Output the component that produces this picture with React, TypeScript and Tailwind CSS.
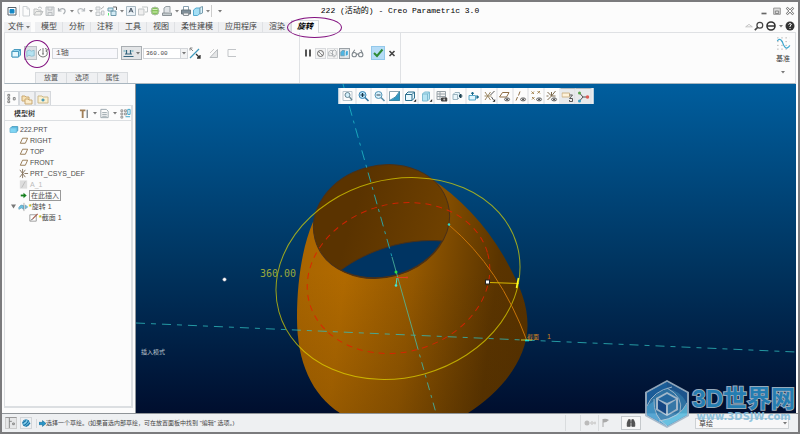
import type { ReactNode } from "react"

type IconProps = { children: ReactNode; className?: string }

function Icon({ children, className = "size-3" }: IconProps) {
    return (
        <svg viewBox="0 0 12 12" className={`${className} shrink-0`} fill="none" stroke="#7d858b" aria-hidden="true">
            {children}
        </svg>
    )
}

function Caret({ className = "w-[7px]" }: { className?: string }) {
    return (
        <span className={`flex shrink-0 justify-center ${className}`}>
            <svg viewBox="0 0 4 3" className="h-[3px] w-1" aria-hidden="true">
                <path d="M0 0H4L2 2.6Z" fill="#777" />
            </svg>
        </span>
    )
}

const cube = (
    <g strokeWidth="1" stroke="#4a9cc0">
        <path d="M2 4.5L4 2.5H10.5V8L8.5 10H2Z" fill="#8fd3ee" />
        <path d="M2 4.5H8.5V10H2Z" fill="#e6f8fe" />
        <path d="M8.5 4.5L10.5 2.5" />
    </g>
)

const eye = (
    <g strokeWidth=".8" stroke="#444">
        <ellipse cx="8.6" cy="9.4" rx="2.6" ry="1.5" fill="#eee" />
        <circle cx="8.6" cy="9.4" r=".6" fill="#333" />
    </g>
)

const quickAccess: { label: string; icon: ReactNode; menu?: boolean }[] = [
    { label: "新建", icon: <path d="M3 1.500H7L9.500 4V11H3ZM7 1.500V4H9.500" stroke="#c9cdd0" /> },
    { label: "打开", icon: <><path d="M2 10V4H5L6 5H9V10ZM2 10L4 6.500H11L9 10" stroke="#b9bcbd" fill="#ededea" /><path d="M6 3Q8 .5 10 3.500" stroke="#b0b5b8" /></> },
    { label: "保存", icon: <><path d="M2 2H10V10.500H2Z" stroke="#b4b8bb" fill="#e3e5e6" /><path d="M4 2V5H8V2M4 10V7.500H8V10" stroke="#b4b8bb" /></> },
    { label: "撤消", menu: true, icon: <path d="M2.500 3V6H5.500M2.500 6Q5 2.500 8 4Q10.500 6 7.500 9" stroke="#9da3a8" strokeWidth="1.200" /> },
    { label: "重做", menu: true, icon: <path d="M9.500 3V6H6.500M9.500 6Q7 2.500 4 4Q1.500 6 4.500 9" stroke="#b2b7bb" strokeWidth="1.200" /> },
    { label: "重新生成", icon: <><path d="M2 2H6V5H2ZM2 7H6V10.500H2ZM7.500 6H10V10H7.500Z" stroke="#b9bec2" fill="#eceeef" /><path d="M7 4L10 1.500" stroke="#aaa" /></> },
    { label: "窗口", menu: true, icon: <><path d="M2 3H7V6H2ZM5 6H10V10.500H5Z" fill="#cfeaf5" stroke="#5f8ea3" /><path d="M7 2H10.500V5" stroke="#555" /><path d="M2.500 8V10.500" stroke="#4e6" /></> },
    { label: "注释", icon: <><path d="M1.500 1.500H10.500V10.500H1.500Z" fill="#eaf2f7" stroke="#9eb0bb" /><path d="M4 7.500L6 3L8 7.500M5 6H7" stroke="#345" /></> },
    { label: "复制窗口", icon: <><path d="M1.500 4H7V10H1.500Z" fill="#eee" stroke="#b9bec0" /><path d="M5 2H10.500V7H8" stroke="#b9bec0" /></> },
    { label: "联机", icon: <><circle cx="6" cy="6" r="4" fill="#79bd4a" stroke="#a6b9a0" /><path d="M3.500 4.500H8.500M3.500 7H8.500" stroke="#d4efb6" /></> },
    { label: "模型显示", menu: true, icon: <><path d="M3 8V3L5 1.500H9V7" fill="#dde2e5" stroke="#8b949a" /><path d="M1.500 8H10.500V10.500H1.500Z" fill="#bfc7cb" stroke="#7e878c" /></> },
    { label: "打印", icon: <><path d="M3.500 5V1.500H8.500V5" fill="#fff" stroke="#7c97a8" /><path d="M1.500 5H10.500V9H1.500Z" fill="#728490" stroke="#5b6871" /><path d="M3.500 8H8.500V10.500H3.500Z" fill="#eee" /></> },
    { label: "视图管理", menu: true, icon: <><path d="M1.500 5L4 3H8V8.500L5.500 10.500H1.500Z" fill="#9bdcf5" stroke="#45a3cc" /><path d="M8 2.500L10.500 1.500V8L8 9Z" fill="#d9f3fd" stroke="#6b93a5" /></> },
]

const viewTools: { label: string; icon: ReactNode; pressed?: boolean }[] = [
    { label: "重新调整", icon: <><path d="M1.500 1.500H10.500V10.500H1.500Z" stroke="#b9c6ce" /><circle cx="6" cy="5" r="2.500" fill="#d4f0fb" stroke="#668694" /><path d="M8 7L10.500 10" stroke="#668694" strokeWidth="1.300" /></> },
    { label: "放大", icon: <><circle cx="5" cy="5" r="3.500" fill="#b8e4f8" stroke="#3a86b4" /><path d="M3 5H7M5 3V7" stroke="#16364b" strokeWidth="1.200" /><path d="M7.500 7.500L11 11" stroke="#3376a0" strokeWidth="1.600" /></> },
    { label: "缩小", icon: <><circle cx="5" cy="5" r="3.500" fill="#d7f0fb" stroke="#5798b8" /><path d="M3 5H7" stroke="#345" strokeWidth="1.200" /><path d="M7.500 7.500L11 11" stroke="#5e8fa9" strokeWidth="1.600" /></> },
    { label: "重画", icon: <><path d="M1 1.500H11V10.500H1Z" fill="#fff" stroke="#8aa4b1" /><path d="M11 1.500V10.500H1Q8 8 11 1.500Z" fill="#2f96c1" stroke="#3a88a8" /></> },
    { label: "显示样式", icon: <><path d="M1 4.500L3.500 2H10V8L7.500 10.500H1ZM1 4.500H7.500V10.500M7.500 4.500L10 2" fill="#e8f8fe" stroke="#2c6f8d" /><path d="M11.800 9V11.800H9Z" fill="#222" stroke="none" /></> },
    { label: "已保存方向", icon: <><path d="M2 4L4 2H9V9L7 11H2ZM2 4H7V11M7 4L9 2" fill="#b5e4f3" stroke="#7ebbd1" /><path d="M11.800 9V11.800H9Z" fill="#222" stroke="none" /></> },
    { label: "视图管理器", icon: <><path d="M1.500 1.500H10V9.500H1.500ZM1.500 4H10M1.500 6.500H10M4.500 1.500V9.500" stroke="#98a2a8" fill="#f4f4f4" /><path d="M6 8H11.500V11H6Z" fill="#444" stroke="#444" /><circle cx="8.700" cy="9.400" r="1" fill="#bbb" stroke="none" /></> },
    { label: "剖面", icon: <><path d="M1.500 4.500L3.500 2.500H8V7.500L6 9.500H1.500ZM1.500 4.500H6V9.500" fill="#e9f6fb" stroke="#9cb5c1" /><path d="M11 6H8M9.500 4V8L7.500 6Z" fill="#16465f" stroke="#245" /></> },
    { label: "定向", icon: <><path d="M1.500 5.500H8V10H1.500Z" fill="#dff5fd" stroke="#58a8c8" /><path d="M5 5V2.500M4 3.500L5 2L6 3.500ZM9 7H11M9.500 5.500L11 7L9.500 8.500Z" fill="#17688a" stroke="#17688a" /></> },
    { label: "基准显示", icon: <><path d="M1.500 2L7 10M7 2L1.500 10M1 6H8" stroke="#9a8660" /><path d="M7 5L11 1M8 7L10 10" stroke="#555" /><path d="M11.800 9V11.800H9Z" fill="#222" stroke="none" /></> },
    { label: "平面显示", icon: <><path d="M1 7L4 2.500H10.500L8 7Z" stroke="#8d6d45" fill="#fff" />{eye}</> },
    { label: "轴显示", icon: <><path d="M1.500 10.500L3 7M4 5.500L5.500 1.500" stroke="#8d6d45" />{eye}</> },
    { label: "点显示", icon: <><path d="M1 1.500L3.500 4M3.500 1.500L1 4M7 1L9.500 3.500M9.500 1L7 3.500M1.500 7L4 9.500M4 7L1.500 9.500" stroke="#a48552" />{eye}</> },
    { label: "坐标系显示", icon: <><path d="M2 2L6 6L10 1M6 6V2M6 6L2 10M6 6H10M1 6H3" stroke="#7c6a4e" />{eye}</> },
    { label: "注释显示", pressed: true, icon: <><path d="M.5 2H8V6H.5Z" fill="#fff2d9" stroke="#cdb48a" /><path d="M8 4H11L8 7.500H11V10.500H8V9" stroke="#555" /></> },
    { label: "旋转中心", pressed: true, icon: <><path d="M2 2L5.500 6L2 10M5.500 6H10" stroke="#555" /><circle cx="2" cy="2" r="1.500" fill="#58a44c" stroke="none" /><circle cx="2" cy="10" r="1.500" fill="#3b9dc1" stroke="none" /><circle cx="10" cy="6" r="1.800" fill="#df5d55" stroke="none" /></> },
]

const plane = <path d="M2.500 9L5 3.500H10.500L8 9Z" stroke="#94764f" />

const datums = ["RIGHT", "TOP", "FRONT"]

function TitleBar() {
    return (
        <header className="relative flex h-[18px] shrink-0 items-center pr-[3px] pl-1">
            <button aria-label="系统" className="mr-px">
                <Icon><path d="M2 2.500H10V10H2Z" fill="#fff" stroke="#58626a" /><path d="M4 4.500H8V8H4Z" fill="#1688c5" stroke="#1688c5" /></Icon>
            </button>
            <div className="flex items-center border-l border-[#ddd]">
                {quickAccess.map((item) => (
                    <button key={item.label} aria-label={item.label} className="flex items-center opacity-90">
                        <Icon>{item.icon}</Icon>
                        {item.menu && <Caret />}
                    </button>
                ))}
            </div>
            <button aria-label="自定义" className="flex h-3 items-center border-l border-[#ccc] pl-1">
                <Caret />
            </button>
            <h1 className="absolute left-1/2 -translate-x-1/2 font-['Liberation_Mono','Noto_Sans_CJK_SC',monospace] text-[8px] whitespace-nowrap text-black">
                222 (活动的) - Creo Parametric 3.0
            </h1>
            <div className="ml-auto flex items-center gap-[3px]">
                <button aria-label="最小化"><Icon className="size-[10px]"><path d="M3 9H9" stroke="#666" strokeWidth="2" /></Icon></button>
                <button aria-label="还原"><Icon className="size-[10px]"><path d="M2 2.500H10V10H2Z" stroke="#888" fill="#ddd" /><path d="M4 6H8V9H4Z" stroke="#777" /></Icon></button>
                <button aria-label="关闭"><Icon className="size-[10px]"><path d="M2 2L10 10M10 2L2 10" strokeWidth="3.200" stroke="#888" /><path d="M2.500 2.500L9.500 9.500M9.500 2.500L2.500 9.500" strokeWidth="1.200" stroke="#fff" /></Icon></button>
            </div>
        </header>
    )
}

function RibbonTabs() {
    const tabs = ["模型", "分析", "注释", "工具", "视图", "柔性建模", "应用程序", "渲染"]

    return (
        <nav className="flex h-3 shrink-0 items-end px-0.5 text-[8px] leading-[10px] text-[#444]">
            <button className="mr-1 flex h-[10px] items-center bg-[#eff0f2] pl-1">
                文件
                <Caret />
            </button>
            {tabs.map((tab) => (
                <button key={tab} className="h-[10px] border-r border-[#dfe1e4] bg-[#eff0f2] pr-[5px] pl-[6px]">
                    {tab}
                </button>
            ))}
            <div className="relative z-10">
                <button className="-mb-px h-[13px] border border-b-0 border-[#d5d8dc] bg-[#fcfcfc] px-[5px] font-bold text-black italic">
                    旋转
                </button>
                {/* callout round the active tab */}
                <span className="pointer-events-none absolute -top-[3px] -left-1 h-[21px] w-[55px] rounded-[50%] border-[1.500px] border-[#82107f]" />
            </div>
            <div className="ml-auto flex h-full items-center">
                <button aria-label="折叠"><Icon className="size-[10px]"><path d="M2 7L6 4L10 7Z" stroke="#bbb" /></Icon></button>
                <button aria-label="搜索"><Icon className="size-[10px]"><circle cx="7" cy="5" r="3.500" stroke="#444" strokeWidth="1.500" /><path d="M4.500 7.500L1 11" stroke="#444" strokeWidth="2" /></Icon></button>
                <button aria-label="联机学习" className="ml-px flex items-center"><Icon><circle cx="6" cy="6" r="4" stroke="#333" strokeWidth="1.600" /><path d="M2 6H10" stroke="#333" strokeWidth="1.500" /></Icon><Caret /></button>
                <button aria-label="帮助"><Icon><circle cx="6" cy="6" r="4.500" fill="#333" stroke="none" /><path d="M4.500 4.500Q6 2.500 7.300 4.200Q7.500 5 6 6V7M6 8V9" stroke="#fff" /></Icon></button>
            </div>
        </nav>
    )
}

function Ribbon() {
    return (
        <section className="mx-0.5 flex h-[52px] shrink-0 border border-b-[#a9b6bf] border-[#dfe1e4]">
            <div className="flex w-[295px] shrink-0 flex-col justify-between border-r border-[#dfe1e4]">
                <div className="flex items-center pt-[13px] pl-[5px]">
                    <button aria-label="实体" className="mr-0.5"><Icon>{cube}</Icon></button>
                    <div className="relative mr-[3px] flex items-center">
                        <button aria-label="曲面" className="border border-[#bbc0c4] bg-[#dde0e3]">
                            <Icon className="h-3 w-[11px]"><path d="M2 4Q5 1.500 7 4L10 3V9L7 9.500Q4 7 2 10Z" fill="#b5e3f2" stroke="#8cbdd0" /></Icon>
                        </button>
                        <button aria-label="加厚">
                            <Icon><path d="M6 1V7M5 7H7M4 2.500Q0 4 2 8Q6 12 10 8Q11 5 9 3M8 1.500L10.500 2.500L9 5" stroke="#777" /></Icon>
                        </button>
                        {/* callout round the two type buttons */}
                        <span className="pointer-events-none absolute -top-1.5 left-0 h-7 w-[26px] rounded-[50%] border-[1.500px] border-[#82107f]" />
                    </div>
                    <input aria-label="轴" defaultValue="1轴" className="mr-[3px] h-[11px] w-[66px] border border-[#d3d6da] bg-[#f8f8fc] px-[3px] font-['Liberation_Mono','Noto_Sans_CJK_SC',monospace] text-[8px] text-[#555]" />
                    <button aria-label="旋转角度类型" className="flex h-[14px] items-center border border-[#a9aeb2] bg-[#e3e5e7]">
                        <Icon className="h-3 w-[13px]"><path d="M1 9.500H11M4 3V7M8 3V7M2.500 7H9.500" stroke="#35657e" strokeWidth="1.200" /><path d="M1 4H3M9 4H11" stroke="#5ab" /></Icon>
                        <Caret className="w-[6px]" />
                    </button>
                    <input aria-label="角度" defaultValue="360.00" className="ml-px h-[11px] w-[38px] border border-[#d3d6da] bg-white px-0.5 font-['Liberation_Mono',monospace] text-[6px] text-[#444]" />
                    <button aria-label="角度列表" className="flex h-[11px] items-center border border-l-0 border-[#d3d6da] bg-[#f2f3f4]"><Caret className="w-[6px]" /></button>
                    <button aria-label="反向" className="mr-[7px] ml-px"><Icon><path d="M1 11L10 2" stroke="#409abd" strokeWidth="1.300" /><path d="M4 4L1 1M1 3.500V1H3.500" stroke="#888" /><path d="M7 7L11 11M11 8V11H8" stroke="#333" strokeWidth="1.300" /></Icon></button>
                    <button aria-label="移除材料" className="mr-[6px]"><Icon><path d="M2 10.500L9.500 2.500V10.500Z" fill="#e5e6e7" stroke="#b6babd" /><path d="M2 6L6 2" stroke="#ccc" /></Icon></button>
                    <button aria-label="加厚草绘"><Icon><path d="M10 2.500H2V9.500H10" stroke="#c2c5c8" /></Icon></button>
                </div>
                <div className="flex pl-[30px] text-[7px] leading-[10px] text-[#555]">
                    {["放置", "选项", "属性"].map((label) => (
                        <button key={label} className="h-[11px] w-[31px] border border-r-0 border-b-0 border-[#d8dbde] bg-[#eff0f2] last:border-r">
                            {label}
                        </button>
                    ))}
                </div>
            </div>
            <div className="flex w-[101px] shrink-0 items-start gap-px border-r border-[#dfe1e4] pt-[13px] pl-0.5">
                <button aria-label="暂停"><Icon className="h-[14px] w-3"><path d="M4 2.500V9.500M8 2.500V9.500" stroke="#555" strokeWidth="2" /></Icon></button>
                <button aria-label="无预览" className="mt-0.5 border border-[#d8dadd] bg-[#f3f3f3]"><Icon className="size-[9px]"><circle cx="6" cy="6" r="4" stroke="#666" strokeWidth="1.300" /><path d="M3 3L9 9" stroke="#666" /></Icon></button>
                <button aria-label="分离预览" className="mt-0.5 border border-[#dcdee0] bg-[#f3f3f3]"><Icon className="size-[9px]"><path d="M1 4L3 2H6V9H1ZM6 3L9 1L11 3V8L8 11L6 9M3 5L9 9" stroke="#9a9fa3" /></Icon></button>
                <button aria-label="连接预览" className="mt-0.5 border border-[#9aa1a6] bg-[#dfe3e6]"><Icon className="size-[9px]"><path d="M1 4L3 2H6V9H1Z" fill="#4fb6e3" stroke="#6798ae" /><path d="M7 4L9 2H11V8L7 10Z" fill="#3aa9dc" stroke="#fff" /></Icon></button>
                <button aria-label="校验预览"><Icon className="h-[14px] w-[13px]"><circle cx="3" cy="7.500" r="2" /><circle cx="9" cy="7.500" r="2" /><path d="M5 7H7M1.500 6L3.500 3M10.500 6L9 3" /></Icon></button>
                <button aria-label="确定" className="ml-[6px] border border-[#93c8ea] bg-[#b5dcf7]"><Icon><path d="M2 6L5 9L10.500 2.500" stroke="#2e8b35" strokeWidth="2" /></Icon></button>
                <button aria-label="取消"><Icon className="h-[14px] w-3"><path d="M3.500 4L8.500 9M8.500 4L3.500 9" stroke="#444" strokeWidth="1.600" /></Icon></button>
            </div>
            <button className="ml-auto flex w-6 flex-col items-center pt-[3px] text-[7px] leading-[9px] text-[#333]">
                <Icon className="size-[15px]">
                    <path d="M1 1.500H11M1 4.500H11M1 7.500H11M1 10.500H11" stroke="#aaa" strokeDasharray="1 2.300" strokeWidth=".8" />
                    <path d="M1 4Q3 1 5 4.500Q7 10.500 9 9.500Q10.500 9 11 7.500" stroke="#3da7cf" />
                </Icon>
                <span className="mt-[3px] mb-2">基准</span>
                <Caret />
            </button>
        </section>
    )
}

function ModelTree() {
    return (
        <aside className="flex w-[134px] shrink-0 flex-col border-r border-[#8d9499] px-0.5 pt-[7px] pb-[5px] text-[7px] leading-[11px] text-[#4c4c4c]">
            <div className="flex">
                <button aria-label="模型树" className="border border-b-0 border-[#d5d8dc] px-px"><Icon className="h-[13px] w-[11px]"><path d="M2 1.500H4V3.500H2ZM2 5H4V7H2ZM2 8.500H4V10.500H2ZM8 5H10V7.500H8Z" stroke="#777" /></Icon></button>
                <button aria-label="文件夹浏览器" className="border border-b-0 border-[#d5d8dc] bg-[#eff0f2] px-px"><Icon><path d="M1 3H4L5 4H8V8H1Z" fill="#f8e2b5" stroke="#c9a871" /><path d="M4 6H7L8 7H11V11H4Z" fill="#fbeccb" stroke="#c9a871" /></Icon></button>
                <button aria-label="收藏夹" className="border border-b-0 border-[#d5d8dc] bg-[#eff0f2] px-px"><Icon><path d="M1 3H5L6 4H11V10H1Z" fill="#fbf0cf" stroke="#cdb98a" /><path d="M6 5.500V8.500M4.500 7H7.500" stroke="#3a93b5" strokeWidth="1.300" /></Icon></button>
            </div>
            <div className="flex flex-1 flex-col border border-r-2 border-b-2 border-[#dcdfe2]">
                <div className="flex h-[15px] items-center border-b border-[#dcdfe2] pl-[9px]">
                    <h2 className="mr-auto font-medium text-[#222]">模型树</h2>
                    <button aria-label="设置" className="flex items-center"><Icon className="size-[11px]"><path d="M1 2.500H7M4 2.500V11" stroke="#a07f58" strokeWidth="2" /><path d="M9 2V11" stroke="#7d8890" strokeWidth="1.500" /></Icon><Caret className="w-[9px]" /></button>
                    <button aria-label="显示" className="flex items-center"><Icon className="size-[11px]"><path d="M2 1.500H8L10 3.500V10.500H2ZM3.500 5H8.500M3.500 7H8.500M3.500 9H8.500" stroke="#98a4ab" /></Icon><Caret className="w-[9px]" /></button>
                    <button aria-label="树列" className="ml-px"><Icon className="size-[11px]"><path d="M1 2H3V4H1ZM1 5.500H3V7.500H1ZM1 9H3V11H1ZM5 2H7V4H5ZM5 5.500H7V7.500H5Z" stroke="#777" strokeWidth=".8" /><path d="M8.500 1.500H11V7H8.500ZM6 9.500H11" stroke="#35a0c6" /></Icon></button>
                </div>
                <ul className="pt-[3px] pl-1">
                    <li className="flex items-center gap-px"><Icon className="h-[11px] w-[10px]"><path d="M1.500 4.500L3.500 2.500H10.500V7.500L8.500 9.500H1.500Z" fill="#54bce6" stroke="#4395b8" /><path d="M1.500 4.500H8.500V9.500H1.500Z" fill="#7fd6f5" stroke="#7fc6e3" /></Icon>222.PRT</li>
                    {datums.map((name) => (
                        <li key={name} className="flex items-center gap-px pl-[9px]"><Icon className="h-[11px] w-[11px]">{plane}</Icon>{name}</li>
                    ))}
                    <li className="flex items-center gap-px pl-[9px]"><Icon className="h-[11px] w-[11px]"><path d="M2 2L8 10M8 2L2 10M5 1V11M7 6H11" stroke="#85735c" /></Icon>PRT_CSYS_DEF</li>
                    <li className="flex items-center gap-px pl-[9px] text-[#bbb]"><Icon className="h-[11px] w-[11px]"><path d="M2 1.500H10V10.500H2Z" fill="#ddd" stroke="none" /><path d="M4 9.500L8 2.500" stroke="#bbb" /></Icon>A_1</li>
                    <li className="flex items-center pl-[9px]"><Icon className="h-[11px] w-[11px]"><path d="M3 6H7" stroke="#16801f" strokeWidth="2" /><path d="M6 3L9.500 6L6 9Z" fill="#16801f" stroke="none" /></Icon><span className="-my-px border border-[#999] px-px leading-[9px]">在此插入</span></li>
                    <li className="flex items-center">
                        <span className="flex w-[9px] justify-center"><Icon className="size-[5px]"><path d="M0 1H12L6 11Z" fill="#777" stroke="none" /></Icon></span>
                        <Icon className="h-[11px] w-[11px]"><path d="M1 7Q3 3 6 5V9Q4 6 1 9ZM8 4.500L10.500 6.500L8 8.500Z" fill="#69c2e2" stroke="#6fa9c2" /><path d="M6.500 2V11" stroke="#888" strokeWidth=".7" /></Icon>
                        <span className="font-bold text-[#b8b800]">*</span>旋转 1
                    </li>
                    <li className="flex items-center pl-[19px]"><Icon className="h-[11px] w-[11px]"><path d="M2 3H9V10H2Z" stroke="#999" fill="#fff" /><path d="M5 7.500L10.500 2" stroke="#a45b4a" strokeWidth="1.300" /><path d="M3.500 9L5 7.500" stroke="#333" /></Icon><span className="font-bold text-[#b8b800]">*</span>截面 1</li>
                </ul>
            </div>
        </aside>
    )
}

const bodyPath =
    "M313 222C303 245 297 279 297 318C297 362 312 395 340 413H468C500 393 527.500 360 527.500 325C527.500 305 521 288 508 264C489 228 462 199 430 178Z"

function ModelView() {
    return (
        <svg viewBox="136 84 660 329" preserveAspectRatio="xMidYMid slice" className="absolute inset-0 size-full" fill="none" role="img" aria-label="旋转特征">
            <defs>
                <linearGradient id="sky" x1="0" y1="0" x2="0" y2="1">
                    <stop offset="0" stopColor="#005e9e" />
                    <stop offset=".55" stopColor="#00345f" />
                    <stop offset="1" stopColor="#000e2e" />
                </linearGradient>
                <linearGradient id="body" gradientUnits="userSpaceOnUse" x1="297" y1="290" x2="524" y2="318">
                    <stop offset="0" stopColor="#a96500" />
                    <stop offset=".2" stopColor="#b16a00" />
                    <stop offset=".5" stopColor="#945800" />
                    <stop offset=".72" stopColor="#704200" />
                    <stop offset=".86" stopColor="#5a3400" />
                    <stop offset="1" stopColor="#573200" />
                </linearGradient>
                <linearGradient id="shade" x1="0" y1="0" x2="0" y2="1">
                    <stop offset=".4" stopColor="#3f2400" stopOpacity="0" />
                    <stop offset="1" stopColor="#3f2400" stopOpacity=".22" />
                </linearGradient>
                <linearGradient id="bore" x1="0" y1="0" x2="1" y2=".5">
                    <stop offset=".4" stopColor="#5a3300" />
                    <stop offset="1" stopColor="#6e4000" />
                </linearGradient>
            </defs>
            <rect x="136" y="84" width="660" height="329" fill="url(#sky)" />
            <path d={bodyPath} fill="url(#body)" />
            <path d={bodyPath} fill="url(#shade)" />
            <ellipse cx="381.500" cy="221.500" rx="68.800" ry="56" transform="rotate(-15 381.500 221.500)" fill="url(#bore)" stroke="#4a3018" />
            <path d="M341 270C368 250 406 238 442 241A68.800 56 -15 0 1 341 270Z" fill="#003462" stroke="#4a3018" />

            {/* drag circle and sketch circle */}
            <ellipse cx="398" cy="278.500" rx="123.600" ry="99" transform="rotate(-15.500 398 278.500)" stroke="#e4dc00" strokeOpacity=".68" />
            <ellipse cx="398.500" cy="278" rx="92.500" ry="74" transform="rotate(-15.500 398.500 278)" stroke="#e02000" strokeOpacity=".85" strokeDasharray="6 5" />

            {/* axes */}
            <path d="M343 84L392 257" stroke="#20bcc8" strokeOpacity=".8" strokeDasharray="10 5 3 5" />
            <path d="M392 257L416 342" stroke="#50bca0" strokeOpacity=".8" />
            <path d="M416 342L436 413" stroke="#40bcb0" strokeOpacity=".8" strokeDasharray="8 5 3 5" />
            <path d="M136 323L796 352" stroke="#30c0c0" strokeOpacity=".75" strokeDasharray="9 6 5 6" />
            <path d="M397 277.500H407" stroke="#e04020" />
            <circle cx="407" cy="277.500" r="1" fill="#e04020" />
            <circle cx="396" cy="272" r="1.500" fill="#30e040" />
            <path d="M397 278L396 285" stroke="#50e0c0" />
            <circle cx="396" cy="285.500" r="1.300" fill="#40e8d8" />

            <path d="M449 225Q500 268 527 341" stroke="#c87408" />
            <circle cx="449" cy="224.500" r="1.200" fill="#30d8c8" />
            <path d="M489 282.500L519 283.500" stroke="#d8b800" />
            <path d="M518.500 278L516.500 288" stroke="#ffff20" strokeWidth="1.600" />
            <rect x="485.500" y="280" width="4" height="4" fill="#fff" stroke="#222" />
            <path d="M521 340H532" stroke="#c0d040" />
            <path d="M525 340.500H529" stroke="#20e0d0" strokeWidth="1.600" />
            <circle cx="224.500" cy="279.500" r="1.800" fill="#fff" stroke="#889" strokeWidth=".5" />

            <text x="260" y="277" fill="#9aa83c" className="font-['DejaVu_Sans_Mono',monospace] text-[10px]">360.00</text>
            <text x="527" y="339" fill="#d08420" className="text-[6px]">截面</text>
            <text x="547" y="339" fill="#d08420" className="text-[7px]">1</text>
            <text x="141" y="354" fill="#bcc4cc" className="text-[6px]">插入模式</text>
        </svg>
    )
}

function Viewport() {
    return (
        <main className="relative min-w-0 flex-1 overflow-hidden">
            <ModelView />
            <div className="absolute top-1 left-1/2 grid w-[255px] -translate-x-1/2 grid-cols-16 border-x-2 border-[#e9ecee] bg-[#fcfcfc]">
                {viewTools.map((tool) => (
                    <button
                        key={tool.label}
                        aria-label={tool.label}
                        className={`flex h-4 items-center justify-center border-r border-[#d9dcdf] ${tool.pressed ? "border-t border-t-[#b5babd] bg-[#e8eaec]" : ""}`}
                    >
                        <Icon>{tool.icon}</Icon>
                    </button>
                ))}
            </div>
        </main>
    )
}

function StatusBar() {
    return (
        <footer className="flex h-[19px] shrink-0 items-center border-t border-[#8f9498] bg-[#eef0f2] px-[3px] text-[#444]">
            <button aria-label="导航器" className="mr-[3px] border border-[#ccc] border-t-[#999] bg-[#e6e7e8]"><Icon className="size-[10px]"><path d="M4 0V12M4 4H7M8 6H10V8H8Z" stroke="#777" /></Icon></button>
            <button aria-label="浏览器" className="border border-[#d2d5d8]"><Icon className="size-[10px]"><circle cx="6" cy="6" r="4" fill="#8ad0ee" stroke="#3187b4" /><path d="M3 9Q7 8 9 3M2 6L6 3M6 10L11 6" stroke="#1674a6" strokeWidth="1.300" /></Icon></button>
            <p className="ml-1 flex items-center border-l border-[#d5d8da] pl-0.5 text-[6px] whitespace-nowrap">
                <Icon className="size-[7px]"><path d="M0 4H6V1L12 6L6 11V8H0Z" fill="#2795c9" stroke="#1c6e98" /></Icon>
                选择一个草绘。(如果首选内部草绘，可在放置面板中找到 "编辑" 选项。)
            </p>
            <div className="ml-auto flex h-4 items-center">
                <span className="h-full w-[15px] border-l border-[#d9dcde]" />
                <span className="flex h-full w-[18px] items-center border-l border-[#d9dcde] pl-[3px]"><Icon><circle cx="3" cy="6" r="2.500" fill="#bbb" stroke="none" /><circle cx="8" cy="6" r="1.300" fill="#ddd" stroke="#ccc" /><circle cx="11" cy="6" r="1" fill="#ddd" stroke="#ccc" /></Icon></span>
                <span className="flex h-full w-[23px] items-center border-l border-[#d9dcde] pl-px"><Icon><path d="M3 2V10" stroke="#aaa" /><path d="M3 2Q6 1 9 3Q6 6 3 5.500Z" fill="#aaa" stroke="none" /></Icon></span>
                <button aria-label="查找" className="flex h-[14px] w-5 items-center justify-center border border-[#c5c9cc] bg-[#f7f7f7]"><Icon className="size-[10px]"><path d="M3 2H5V10H1.500V6ZM7 2H9L10.500 6V10H7ZM5 5H7" fill="#555" stroke="#444" /></Icon></button>
                <div className="relative ml-[54px]">
                    <select aria-label="选择过滤器" className="block h-[11px] w-[94px] appearance-none border border-[#cdd1d4] bg-[#f7f7f8] pl-[3px] text-[7px] leading-[9px]">
                        <option>草绘</option>
                    </select>
                    <Caret className="pointer-events-none absolute top-1 right-px w-[6px]" />
                </div>
                <span className="w-[6px]" />
            </div>
        </footer>
    )
}

function Watermark() {
    return (
        <div className="pointer-events-none absolute right-[3px] bottom-[3px] flex items-center gap-0.5 opacity-90">
            <svg viewBox="0 0 46 50" className="h-[50px] w-[46px]" aria-hidden="true">
                <path d="M23 1L45 13V37L23 49L1 37V13Z" fill="#9fb4c7" />
                <path d="M23 3L43 14V36L23 47L3 36V14Z" fill="#347cae" />
                <path d="M23 3L3 14V27Q9 14 28 8Z" fill="#1f65a3" />
                <path d="M23 3L43 14V24Q36 11 23 10Z" fill="#215c96" />
                <path d="M43 36L23 47L15 42Q33 39 43 25Z" fill="#5bbbdf" />
                <path d="M3 27V36L23 47Q10 39 10 22Z" fill="#489ed0" />
                <path d="M3 27Q9 12 28 8M10 20Q9 38 23 47M15 42Q36 39 43 24M36 33Q40 18 23 9" fill="none" stroke="#a8c4d8" />
                <path d="M23 13L34 19V31L23 37L12 31V19Z" fill="#b3c9da" />
                <path d="M23 15L32 20L23 24L14 20Z" fill="#2a71aa" />
                <path d="M14 21L22 26V35L14 30Z" fill="#194d8c" />
                <path d="M32 21L24 26V35L32 30Z" fill="#3b83b4" />
            </svg>
            <div className="flex flex-col items-center font-bold">
                <span className="text-2xl leading-[26px] text-[#2989c0] [paint-order:stroke_fill] [-webkit-text-stroke:2px_#a8bccb]">3D世界网</span>
                <span className="font-['DejaVu_Sans',sans-serif] text-[10px] leading-[10px] text-[#86bfdc]">www.3DSJW.com</span>
            </div>
        </div>
    )
}

export default function App() {
    return (
        <div className="relative flex min-h-screen flex-col overflow-hidden border-2 border-[#7b7b7d] bg-[#fcfcfc] font-['Liberation_Sans','Noto_Sans_CJK_SC',sans-serif]">
            <TitleBar />
            <RibbonTabs />
            <Ribbon />
            <div className="flex flex-1 pr-0.5">
                <ModelTree />
                <Viewport />
            </div>
            <StatusBar />
            <Watermark />
        </div>
    )
}
